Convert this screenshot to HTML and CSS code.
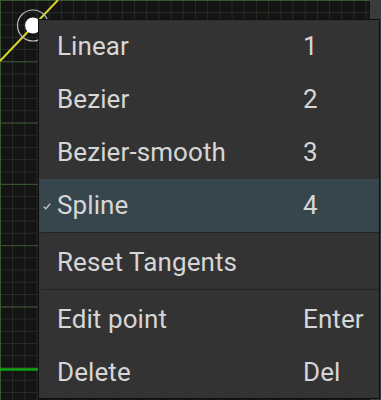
FILE: index.html
```html
<!DOCTYPE html>
<html>
<head>
<meta charset="utf-8">
<link rel="stylesheet" href="styles.css">
</head>
<body>
<div class="stage">
  <div class="canvas">
    <svg class="curves" width="381" height="400" viewBox="0 0 381 400">
      <line x1="0" y1="61" x2="58" y2="0" stroke="#d6d62a" stroke-width="2"/>
      <line x1="0" y1="369.5" x2="40" y2="369.5" stroke="#12a012" stroke-width="2.5"/>
      <circle cx="33" cy="25.5" r="15.5" fill="none" stroke="#bdbdbd" stroke-width="1.2"/>
      <circle cx="33" cy="25.5" r="8" fill="#ffffff"/>
    </svg>
  </div>
  <div class="panel"></div>
  <div class="menu">
    <div class="item"><span class="check"></span><span class="label">Linear</span><span class="key">1</span></div>
    <div class="item"><span class="check"></span><span class="label">Bezier</span><span class="key">2</span></div>
    <div class="item"><span class="check"></span><span class="label">Bezier-smooth</span><span class="key">3</span></div>
    <div class="item active"><span class="check"><svg width="8" height="7" viewBox="0 0 8 7"><polyline points="0.8,3.8 2.8,5.8 7.2,0.8" fill="none" stroke="#c8c8c8" stroke-width="1.3"/></svg></span><span class="label">Spline</span><span class="key">4</span></div>
    <div class="sep"></div>
    <div class="item"><span class="check"></span><span class="label">Reset Tangents</span><span class="key"></span></div>
    <div class="sep"></div>
    <div class="item"><span class="check"></span><span class="label">Edit point</span><span class="key">Enter</span></div>
    <div class="item"><span class="check"></span><span class="label">Delete</span><span class="key">Del</span></div>
  </div>
</div>
</body>
</html>
```
FILE: styles.css
```css
html, body {
  margin: 0;
  padding: 0;
  width: 381px;
  height: 400px;
  overflow: hidden;
  background: #141414;
}

.stage {
  position: relative;
  width: 381px;
  height: 400px;
  overflow: hidden;
}

.canvas {
  position: absolute;
  left: 0;
  top: 0;
  width: 370px;
  height: 400px;
  background-color: #141414;
  background-image:
    linear-gradient(to right, #3a5632 1px, transparent 1px),
    linear-gradient(to bottom, #3a5632 1px, transparent 1px),
    linear-gradient(to right, #262d24 1px, transparent 1px),
    linear-gradient(to bottom, #262d24 1px, transparent 1px);
  background-size: 61px 61.3px, 61px 61.3px, 12.2px 12.26px, 12.2px 12.26px;
  background-position: 0 0, 0 0, 0 0, 0 0;
}

.curves {
  position: absolute;
  left: 0;
  top: 0;
}

.panel {
  position: absolute;
  left: 370px;
  top: 0;
  width: 11px;
  height: 400px;
  background: #3b3b3b;
}

.menu {
  position: absolute;
  left: 38px;
  top: 19px;
  width: 340px;
  height: 378px;
  background: #333333;
  border: 1px solid #0e0e0e;
  font-family: Roboto, "Liberation Sans", sans-serif;
  font-size: 26px;
  color: #d6d6d6;
  display: flex;
  flex-direction: column;
}

.item {
  display: grid;
  grid-template-columns: 18px 246px 1fr;
  align-items: center;
  height: 53px;
  flex: none;
  white-space: nowrap;
}

.item.active {
  background: #37454d;
}

.check {
  display: flex;
  align-items: center;
  justify-content: flex-start;
  padding-left: 4px;
  padding-top: 2px;
}

.check svg {
  display: block;
}

.label, .key {
  line-height: 53px;
  letter-spacing: 0.1px;
}

.sep {
  flex: none;
  height: 1px;
  margin: 0 0 3px 2px;
  background: #232323;
}
```
